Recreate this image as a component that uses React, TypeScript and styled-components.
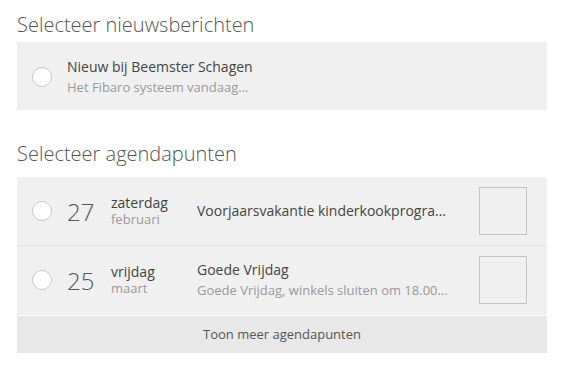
import styled, { createGlobalStyle } from 'styled-components';

const GlobalStyle = createGlobalStyle`
  body {
    margin: 0;
    background: #fff;
    font-family: 'Open Sans', 'Noto Sans', sans-serif;
    color: #444;
  }
`;

const Page = styled.div`
  width: 530px;
  padding: 11px 0 0 17px;
`;

const Heading = styled.h2<{ $gap: number }>`
  margin: 0 0 ${({ $gap }) => $gap}px;
  font-size: 20px;
  font-weight: 300;
  line-height: 28px;
  color: #555;
`;

const Panel = styled.div`
  background: #f0f0f0;
  margin-bottom: 30px;
`;

const Row = styled.div<{ $divider?: boolean }>`
  display: flex;
  align-items: center;
  height: 68px;
  padding: 0 20px 0 15px;
  border-bottom: 1px solid ${({ $divider }) => ($divider ? '#e2e2e2' : 'transparent')};
`;

const NewsRow = styled(Row)`
  padding-top: 3px;
  box-sizing: border-box;
`;

const Radio = styled.span`
  flex: none;
  width: 18px;
  height: 18px;
  border-radius: 50%;
  background: #fff;
  border: 1px solid #c8c8c8;
  margin-right: 15px;
`;

const DayNumber = styled.span`
  flex: none;
  width: 44px;
  font-size: 24px;
  font-weight: 300;
  color: #555;
`;

const DateCol = styled.div`
  flex: none;
  width: 86px;
  display: flex;
  flex-direction: column;
  line-height: 16px;
`;

const Weekday = styled.span`
  font-size: 14px;
  color: #444;
`;

const Month = styled.span`
  font-size: 13px;
  color: #999;
`;

const TextCol = styled.div`
  flex: 1;
  min-width: 0;
  display: flex;
  flex-direction: column;
  line-height: 20px;
  margin-right: 27px;
`;

const Title = styled.span`
  font-size: 14px;
  color: #444;
  white-space: nowrap;
  overflow: hidden;
  text-overflow: ellipsis;
`;

const Sub = styled.span`
  font-size: 13px;
  color: #999;
  white-space: nowrap;
  overflow: hidden;
  text-overflow: ellipsis;
`;

const Thumb = styled.span`
  flex: none;
  width: 46px;
  height: 46px;
  border: 1px solid #c4c4c4;
`;

const MoreButton = styled.div`
  border-top: 1px solid #fff;
  background: #e8e8e8;
  height: 37px;
  line-height: 37px;
  text-align: center;
  font-size: 13px;
  color: #555;
`;

const agenda = [
  {
    day: '27',
    weekday: 'zaterdag',
    month: 'februari',
    title: 'Voorjaarsvakantie kinderkookprogramma',
  },
  {
    day: '25',
    weekday: 'vrijdag',
    month: 'maart',
    title: 'Goede Vrijdag',
    sub: 'Goede Vrijdag, winkels sluiten om 18.00uur',
  },
];

export default function App() {
  return (
    <Page>
      <GlobalStyle />
      <Heading $gap={3}>Selecteer nieuwsberichten</Heading>
      <Panel>
        <NewsRow>
          <Radio />
          <TextCol>
            <Title>Nieuw bij Beemster Schagen</Title>
            <Sub>Het Fibaro systeem vandaag...</Sub>
          </TextCol>
        </NewsRow>
      </Panel>
      <Heading $gap={9}>Selecteer agendapunten</Heading>
      <Panel>
        {agenda.map((item, i) => (
          <Row key={item.day} $divider={i < agenda.length - 1}>
            <Radio />
            <DayNumber>{item.day}</DayNumber>
            <DateCol>
              <Weekday>{item.weekday}</Weekday>
              <Month>{item.month}</Month>
            </DateCol>
            <TextCol>
              <Title>{item.title}</Title>
              {item.sub && <Sub>{item.sub}</Sub>}
            </TextCol>
            <Thumb />
          </Row>
        ))}
        <MoreButton>Toon meer agendapunten</MoreButton>
      </Panel>
    </Page>
  );
}
